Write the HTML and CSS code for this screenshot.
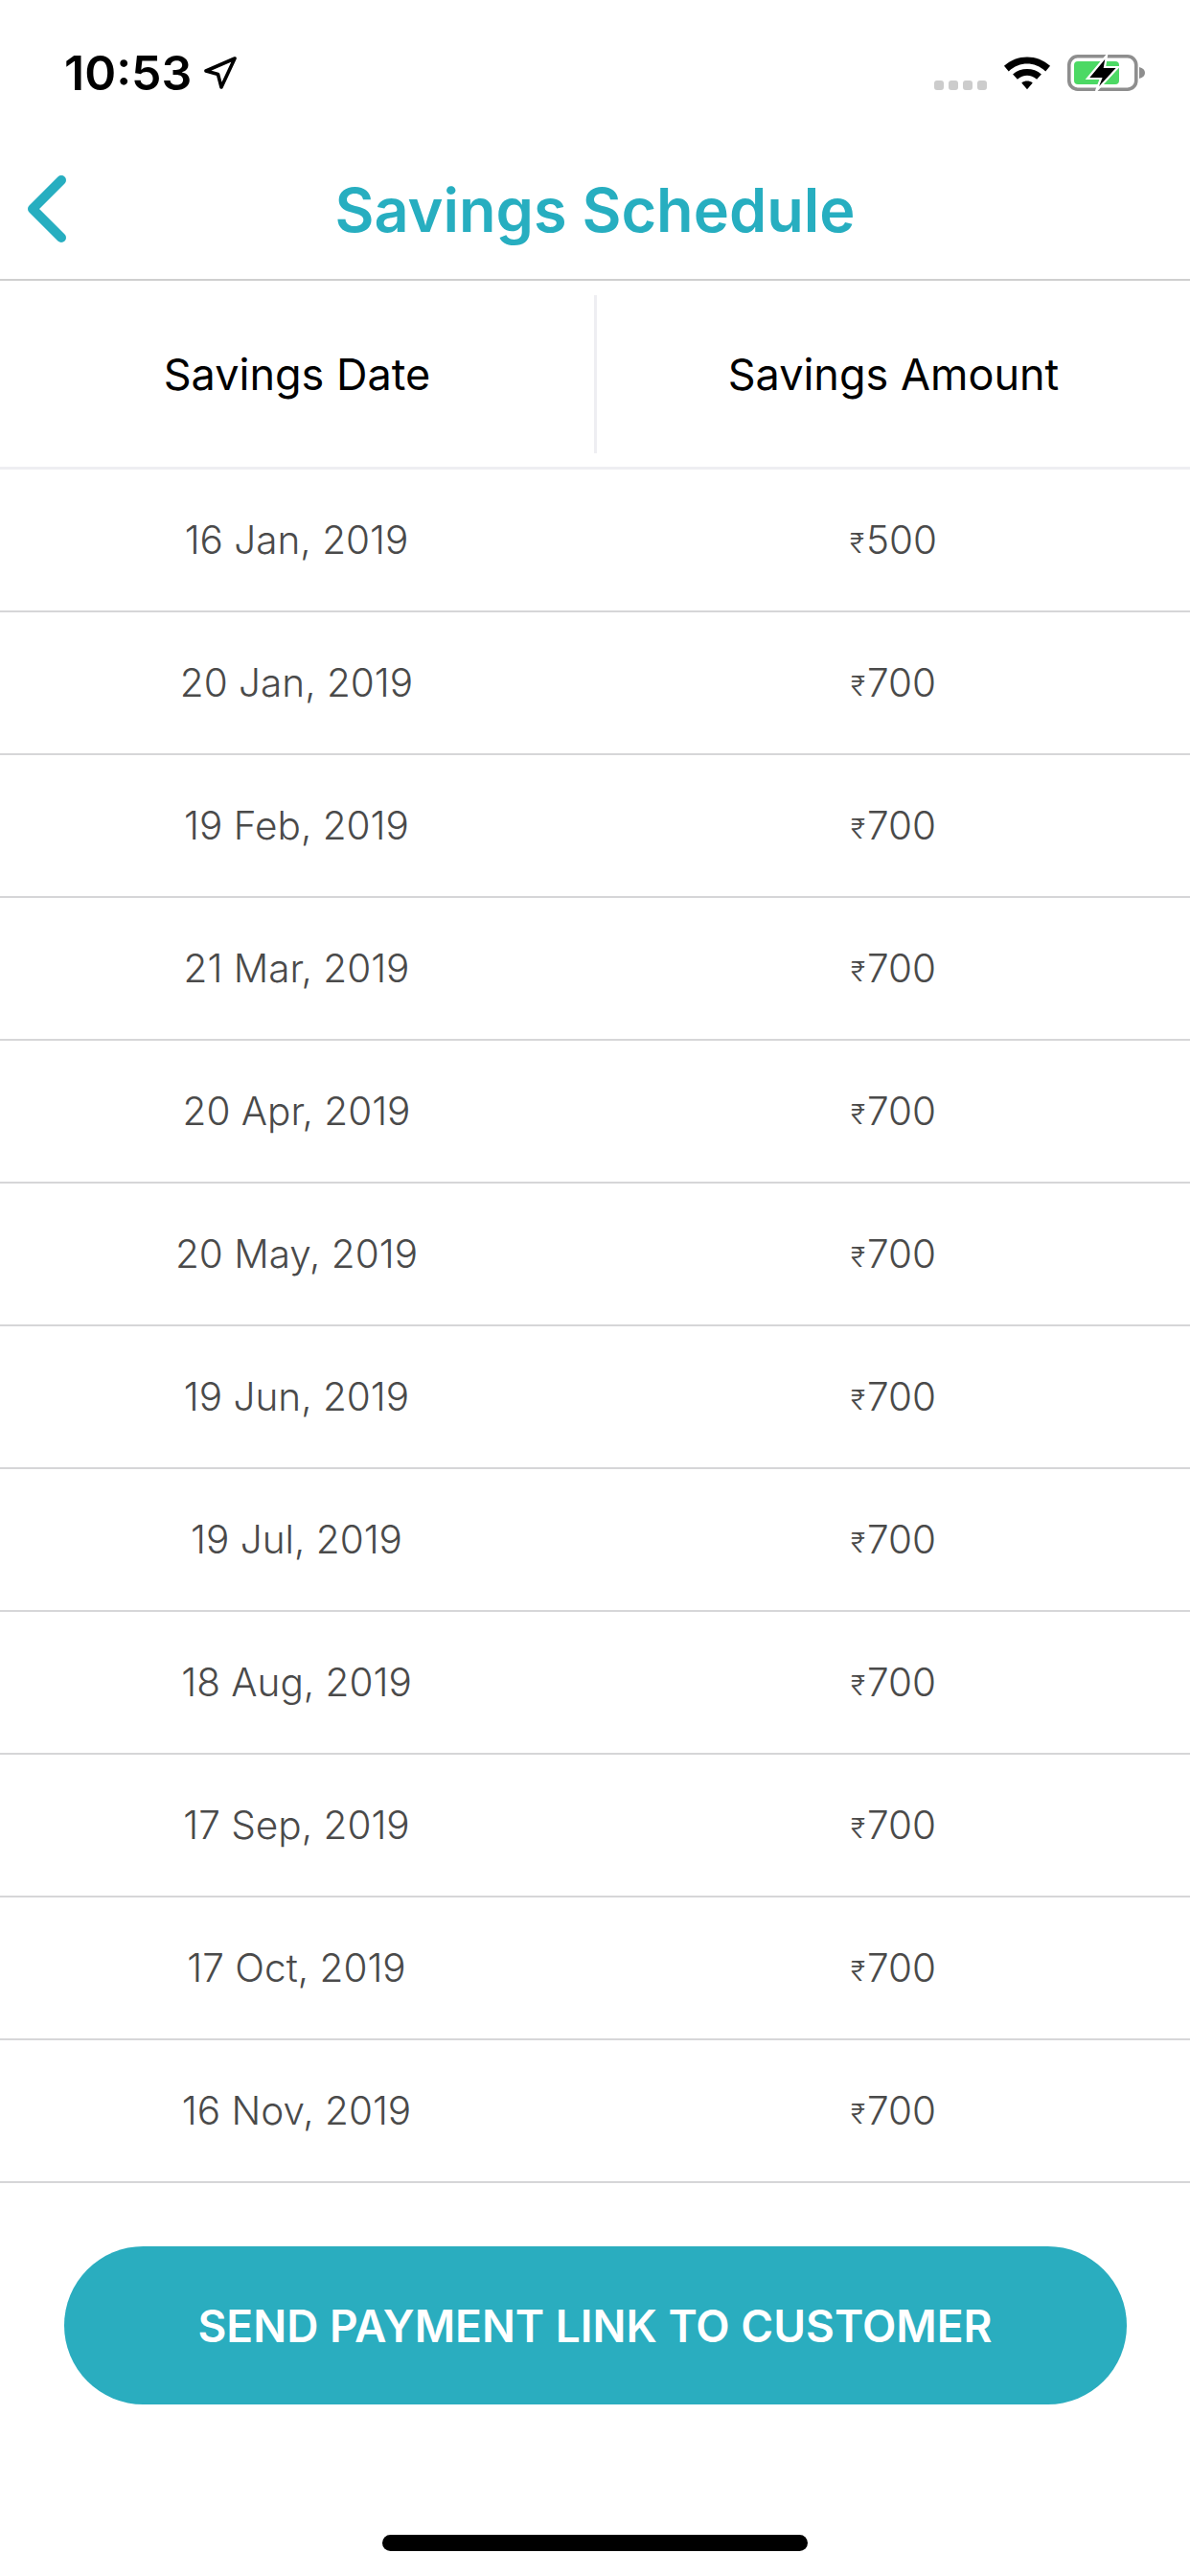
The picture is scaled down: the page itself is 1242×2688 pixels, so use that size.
FILE: index.html
```html
<!DOCTYPE html>
<html lang="en">
<head>
  <meta charset="UTF-8">
  <title>Savings Schedule</title>
  <link rel="stylesheet" href="styles.css">
</head>
<body>
  <div class="status-bar">
    <div class="status-left">
      <span class="time">10:53</span>
      <svg class="location" width="34" height="34" viewBox="0 0 34 34">
        <path d="M32 2 L2 15 L14.500 18.500 L18 32 Z" fill="none" stroke="#000" stroke-width="3.600" stroke-linejoin="round"/>
      </svg>
    </div>
    <div class="status-right">
      <div class="dots"><i></i><i></i><i></i><i></i></div>
      <svg class="wifi" width="50" height="37" viewBox="0 0 52 38">
        <path d="M1 12 C15 -1 37 -1 51 12 L46 18 C34 7 18 7 6 18 Z" fill="#000"/>
        <path d="M10.500 21 C19 13.500 33 13.500 41.500 21 L36.500 26.500 C30 21 22 21 15.500 26.500 Z" fill="#000"/>
        <path d="M20 30.500 C23.500 27.800 28.500 27.800 32 30.500 L26 37.500 Z" fill="#000"/>
      </svg>
      <svg class="battery" width="82" height="38" viewBox="0 0 82 38">
        <rect x="1.800" y="1.800" width="70" height="34.400" rx="9" fill="none" stroke="#8e8e8e" stroke-width="3.600"/>
        <rect x="7" y="7" width="47" height="24" rx="4" fill="#4cd964"/>
        <path d="M75 13 C79 14 81 16 81 19 C81 22 79 24 75 25 Z" fill="#8e8e8e"/>
        <path d="M41 1 L21 25 L35 25 L30 38 L53 13 L39 13 Z" fill="#000" stroke="#fff" stroke-width="2.200"/>
      </svg>
    </div>
  </div>

  <header class="nav">
    <a class="back" href="#">
      <svg width="44" height="72" viewBox="0 0 44 72">
        <path d="M37 6 L7 36 L37 66" fill="none" stroke="#27aec0" stroke-width="10" stroke-linecap="round" stroke-linejoin="round"/>
      </svg>
    </a>
    <h1>Savings Schedule</h1>
  </header>

  <div class="schedule-head">
    <div class="head-cell first">Savings Date</div>
    <div class="head-cell">Savings Amount</div>
  </div>

  <div class="schedule">
    <div class="row"><span>16 Jan, 2019</span><span><small>₹</small>500</span></div>
    <div class="row"><span>20 Jan, 2019</span><span><small>₹</small>700</span></div>
    <div class="row"><span>19 Feb, 2019</span><span><small>₹</small>700</span></div>
    <div class="row"><span>21 Mar, 2019</span><span><small>₹</small>700</span></div>
    <div class="row"><span>20 Apr, 2019</span><span><small>₹</small>700</span></div>
    <div class="row"><span>20 May, 2019</span><span><small>₹</small>700</span></div>
    <div class="row"><span>19 Jun, 2019</span><span><small>₹</small>700</span></div>
    <div class="row"><span>19 Jul, 2019</span><span><small>₹</small>700</span></div>
    <div class="row"><span>18 Aug, 2019</span><span><small>₹</small>700</span></div>
    <div class="row"><span>17 Sep, 2019</span><span><small>₹</small>700</span></div>
    <div class="row"><span>17 Oct, 2019</span><span><small>₹</small>700</span></div>
    <div class="row"><span>16 Nov, 2019</span><span><small>₹</small>700</span></div>
  </div>

  <div class="footer">
    <button class="send-btn">SEND PAYMENT LINK TO CUSTOMER</button>
    <div class="home-bar"></div>
  </div>
</body>
</html>
```

FILE: styles.css
```css
body {
  margin: 0;
  width: 1242px;
  height: 2688px;
  background: #ffffff;
  color: #000000;
  font-family: Inter, "Noto Sans", sans-serif;
  overflow: hidden;
}
.status-bar {
  height: 150px;
  padding: 52px 46px 0 67px;
  box-sizing: border-box;
  display: flex;
  justify-content: space-between;
  align-items: flex-start;
}
.status-left {
  display: flex;
  align-items: center;
  gap: 13px;
}
.time {
  font-size: 50px;
  font-weight: 600;
  line-height: 48px;
}
.location {
  display: block;
}
.status-right {
  display: flex;
  align-items: flex-start;
  gap: 17px;
  padding-top: 5px;
}
.dots {
  display: flex;
  gap: 5px;
  margin-top: 27px;
}
.dots i {
  width: 10px;
  height: 10px;
  border-radius: 3px;
  background: #cccccc;
}
.nav {
  height: 143px;
  padding-bottom: 3px;
  box-sizing: border-box;
  display: flex;
  align-items: center;
  justify-content: center;
  border-bottom: 2px solid #cfcfcf;
  position: relative;
}
.nav h1 {
  margin: 0;
  font-size: 63px;
  font-weight: 600;
  color: #27aec0;
}
.back {
  position: absolute;
  left: 27px;
  top: 32px;
  display: block;
}
.back svg {
  display: block;
}
.schedule-head {
  display: grid;
  grid-template-columns: 623px 619px;
  height: 197px;
  padding: 15px 0 14px;
  box-sizing: border-box;
  border-bottom: 3px solid #eeeef2;
}
.head-cell {
  display: flex;
  align-items: center;
  justify-content: center;
  font-size: 45px;
}
.head-cell.first {
  border-right: 3px solid #eeeef2;
}
.row {
  display: grid;
  grid-template-columns: 619px 623px;
  height: 149px;
  box-sizing: border-box;
  border-bottom: 2px solid #d6d6d8;
  font-size: 40.500px;
  font-weight: 300;
  color: #4a4a4a;
}
.row span {
  display: flex;
  align-items: center;
  justify-content: center;
}
.row span:last-child {
  padding-left: 4px;
}
.row small {
  font-size: 29px;
  margin-right: 2px;
  padding-top: 6px;
}
.footer {
  display: flex;
  flex-direction: column;
  align-items: center;
}
.send-btn {
  width: 1109px;
  height: 165px;
  margin-top: 66px;
  border: none;
  border-radius: 83px;
  background: #2aadbf;
  color: #ffffff;
  font-family: inherit;
  font-size: 46px;
  font-weight: 600;
}
.home-bar {
  width: 444px;
  height: 17px;
  margin-top: 136px;
  border-radius: 9px;
  background: #000000;
}
```
